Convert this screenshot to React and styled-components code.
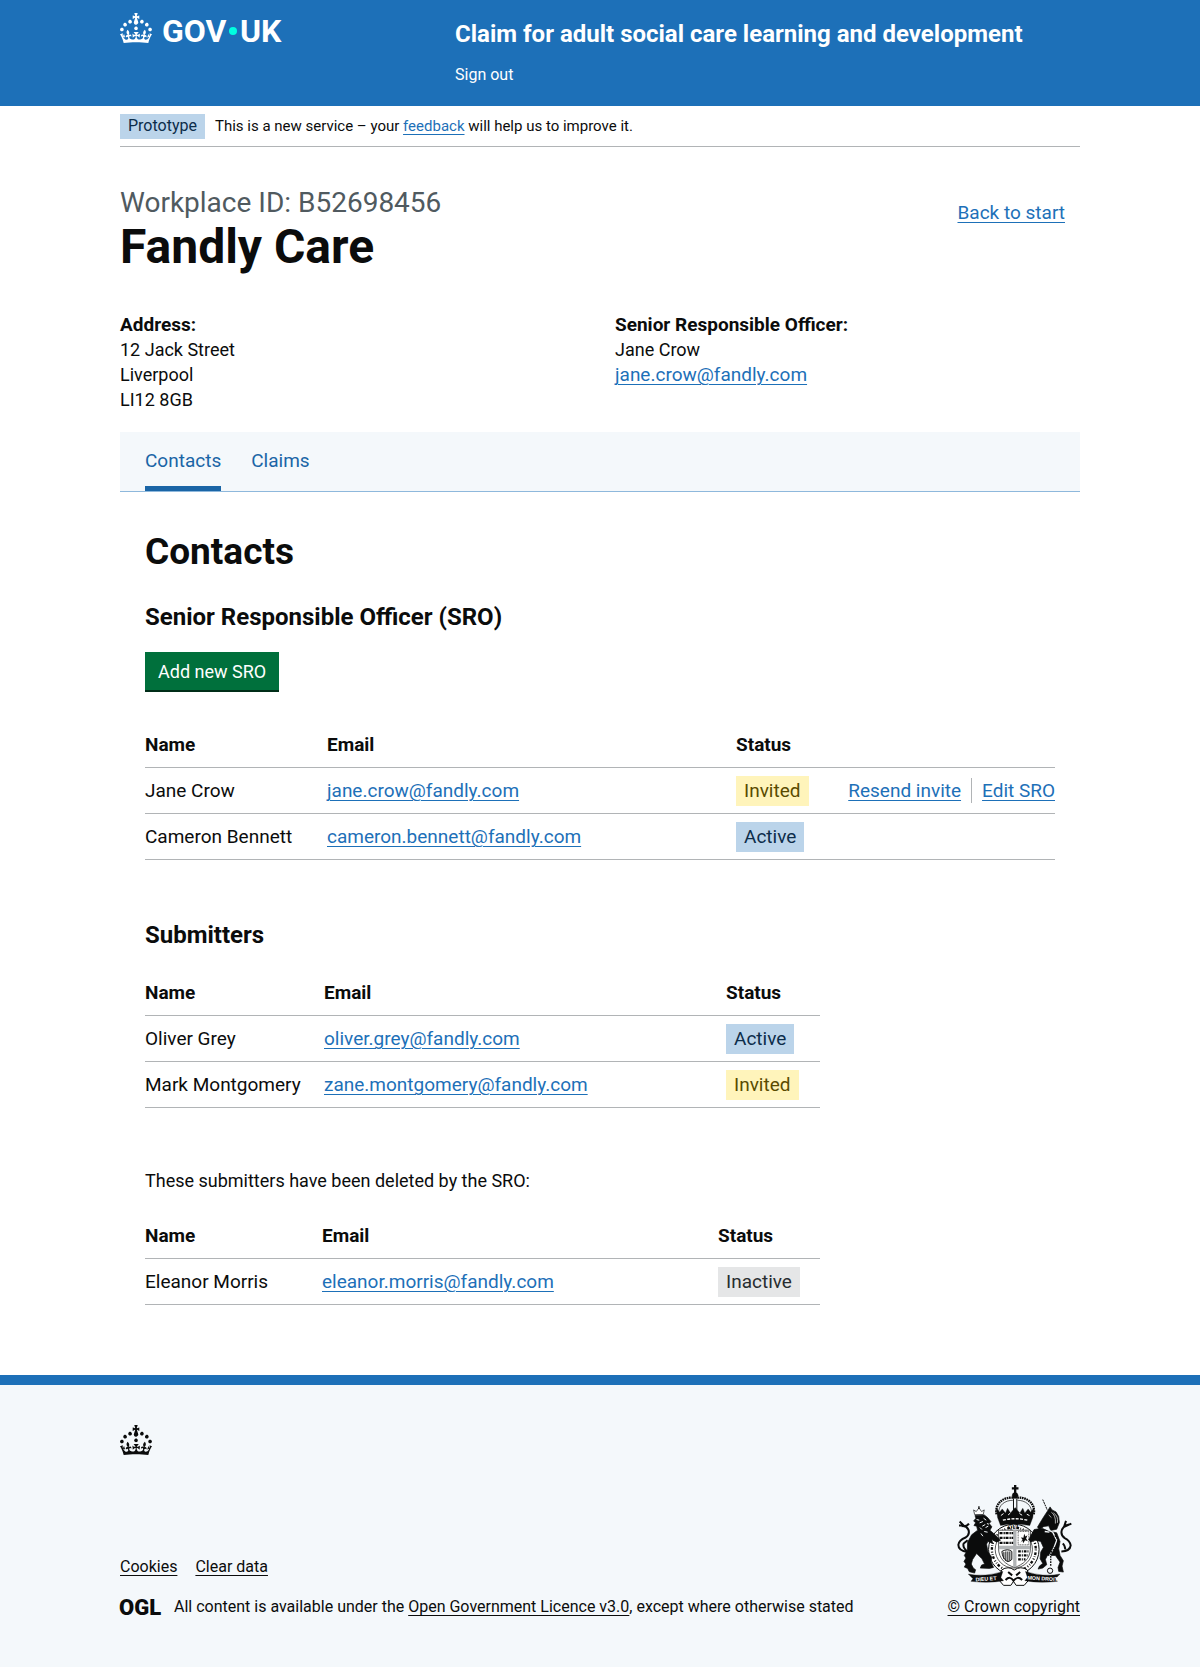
import React from "react";
import styled, { createGlobalStyle } from "styled-components";

const colour = {
  brand: "#1d70b8",
  tint: "#f4f8fb",
  tabBorder: "#8eb8dc",
  tabActive: "#1a65a6",
  text: "#0b0c0c",
  secondary: "#505a5f",
  border: "#b1b4b6",
  green: "#00703c",
  greenShadow: "#002d18",
};

const tagColours = {
  Prototype: { back: "#bbd4ea", text: "#0c2d4a" },
  Active: { back: "#bbd4ea", text: "#0c2d4a" },
  Invited: { back: "#fff4bb", text: "#594b00" },
  Inactive: { back: "#e5e6e7", text: "#282d30" },
};

const GlobalStyle = createGlobalStyle`
  body {
    margin: 0;
    background: #fff;
    color: ${colour.text};
    font: 400 18px/25px Roboto, "Liberation Sans", sans-serif;
  }
  *, *::before, *::after { box-sizing: border-box; }
`;

const Container = styled.div`
  max-width: 960px;
  margin: 0 30px;

  @media (min-width: 1020px) {
    margin: 0 auto;
  }
`;

const Link = styled.a`
  color: ${(p) => (p.$dark ? colour.text : colour.brand)};
  text-decoration: underline;
  text-decoration-thickness: 1px;
  text-underline-offset: 3px;
`;

/* Header */

const Header = styled.header`
  background: ${colour.brand};
  color: #fff;
`;

const HeaderRow = styled(Container)`
  display: grid;
  grid-template-columns: 1fr 2fr;
  padding: 13px 0 21px;
`;

const LogoLink = styled.a`
  display: flex;
  color: #fff;
`;

const HeaderContent = styled.div`
  display: flex;
  flex-direction: column;
  align-items: flex-start;
  gap: 16px;
  padding: 6px 0 0 15px;
`;

const ServiceName = styled.a`
  color: #fff;
  font-size: 24px;
  font-weight: 700;
  line-height: 30px;
  text-decoration: none;
`;

const SignOut = styled.a`
  color: #fff;
  font-size: 16px;
  line-height: 20px;
  text-decoration: none;
`;

/* Phase banner */

const PhaseBanner = styled.div`
  display: flex;
  align-items: center;
  gap: 10px;
  padding: 8px 0 7px;
  border-bottom: 1px solid ${colour.border};
  font-size: 15px;
`;

const Tag = styled.strong`
  display: inline-block;
  padding: ${(p) => (p.$small ? "0 8px 1px" : "2px 8px 3px")};
  background: ${(p) => tagColours[p.$kind].back};
  color: ${(p) => tagColours[p.$kind].text};
  font-size: ${(p) => (p.$small ? "16px" : "19px")};
  font-weight: 400;
  line-height: ${(p) => (p.$small ? "24px" : "25px")};
`;

/* Workplace summary */

const TitleRow = styled.div`
  display: flex;
  justify-content: space-between;
  padding: 40px 15px 0 0;
`;

const Caption = styled.span`
  display: block;
  margin-bottom: 3px;
  color: ${colour.secondary};
  font-size: 28px;
  line-height: 32px;
`;

const PageTitle = styled.h1`
  margin: 0 0 40px;
  font-size: 48px;
  line-height: 50px;
`;

const BackLink = styled(Link)`
  align-self: flex-start;
  margin-top: 13px;
  font-size: 19px;
`;

const Details = styled.div`
  display: grid;
  grid-template-columns: 1fr 1fr;
  column-gap: 30px;
  margin-bottom: 20px;
`;

const DetailTitle = styled.strong`
  display: block;
  font-size: 19px;
`;

const DetailLine = styled.span`
  display: block;
`;

/* Tabs */

const Tabs = styled.nav`
  display: flex;
  gap: 30px;
  padding: 0 25px;
  border-bottom: 1px solid ${colour.tabBorder};
  background: ${colour.tint};
`;

const Tab = styled.a`
  padding: 16px 0 13px;
  border-bottom: 5px solid ${(p) => (p.$active ? colour.tabActive : "transparent")};
  color: ${colour.tabActive};
  font-size: 19px;
  text-decoration: none;
`;

/* Contacts panel */

const Panel = styled.section`
  padding: 40px 25px 70px;
`;

const PanelTitle = styled.h2`
  margin: 0 0 30px;
  font-size: 37px;
  line-height: 40px;
`;

const SectionTitle = styled.h3`
  margin: 0 0 20px;
  font-size: 24px;
  line-height: 30px;
`;

const Button = styled.button`
  display: block;
  margin: 0 0 32px;
  padding: 7px 13px 6px;
  border: 0;
  background: ${colour.green};
  box-shadow: 0 2px 0 ${colour.greenShadow};
  color: #fff;
  cursor: pointer;
  font: inherit;
`;

const Paragraph = styled.p`
  margin: 0 0 20px;
`;

const Table = styled.table`
  width: 100%;
  max-width: ${(p) => (p.$narrow ? "675px" : "none")};
  margin-bottom: ${(p) => (p.$last ? "0" : "60px")};
  border-collapse: separate;
  border-spacing: 0;
  table-layout: fixed;
  font-size: 19px;
`;

const Column = styled.col`
  width: ${(p) => (p.$width ? `${p.$width}px` : "auto")};
`;

const HeadCell = styled.th`
  padding: 10px 0;
  border-bottom: 1px solid ${colour.border};
  text-align: left;
`;

const Cell = styled.td`
  padding: 10px 0;
  border-bottom: 1px solid ${colour.border};
  vertical-align: top;
  white-space: nowrap;
`;

const StatusCell = styled(Cell)`
  padding: 8px 0 7px;
  line-height: 0;
`;

const Actions = styled.ul`
  display: flex;
  justify-content: flex-end;
  margin: 0;
  padding: 0;
  list-style: none;
`;

const Action = styled.li`
  & + & {
    margin-left: 10px;
    padding-left: 10px;
    border-left: 1px solid ${colour.border};
  }
`;

/* Footer */

const Footer = styled.footer`
  padding: 40px 0 50px;
  border-top: 10px solid ${colour.brand};
  background: ${colour.tint};
  font-size: 16px;
  line-height: 20px;
`;

const FooterMeta = styled.div`
  display: flex;
  align-items: flex-end;
  justify-content: space-between;
  margin-top: 29px;
`;

const FooterLinks = styled.div`
  display: flex;
  gap: 18px;
  margin-bottom: 20px;
`;

const Licence = styled.div`
  display: flex;
  align-items: center;
  gap: 13px;
`;

const Copyright = styled(Link)`
  display: flex;
  flex-direction: column;
  align-items: center;
  gap: 10px;
`;

const Drawing = styled.svg`
  display: block;
  flex: none;
  overflow: visible;
`;

const crownPath =
  "M22.6 10.4c-1 .4-2-.1-2.4-1-.4-.9.1-2 1-2.4.9-.4 2 .1 2.4 1s-.1 2-1 2.4m-5.9 6.7c-.9.4-2-.1-2.4-1-.4-.9.1-2 1-2.4.9-.4 2 .1 2.4 1s-.1 2-1 2.4m10.8-3.7c-1 .4-2-.1-2.4-1-.4-.9.1-2 1-2.4.9-.4 2 .1 2.4 1s0 2-1 2.4m3.3 4.8c-1 .4-2-.1-2.4-1-.4-.9.1-2 1-2.4.9-.4 2 .1 2.4 1s-.1 2-1 2.4M17 4.7l2.3 1.2V2.5l-2.3.7-.2-.2.9-3h-3.4l.9 3-.2.2c-.1.1-2.3-.7-2.3-.7v3.4L15 4.7c.1.1.1.2.2.2l-1.3 4c-.1.2-.1.4-.1.6 0 1.1.8 2 1.9 2.2h.7c1-.2 1.9-1.1 1.9-2.1 0-.2 0-.4-.1-.6l-1.3-4c-.1-.2 0-.2.1-.3m-7.6 5.7c.9.4 2-.1 2.4-1 .4-.9-.1-2-1-2.4-.9-.4-2 .1-2.4 1s0 2 1 2.4m-5 3c.9.4 2-.1 2.4-1 .4-.9-.1-2-1-2.4-.9-.4-2 .1-2.4 1s.1 2 1 2.4m-3.2 4.8c.9.4 2-.1 2.4-1 .4-.9-.1-2-1-2.4-.9-.4-2 .1-2.4 1s0 2 1 2.4m14.8 11c4.4 0 8.6.3 12.3.8 1.1-4.5 2.4-7 3.7-8.8l-2.5-.9c.2 1.3.3 1.9 0 2.7-.4-.4-.8-1.1-1.1-2.3l-1.2 4c.7-.5 1.3-.8 2-.9-1.1 2.5-2.6 3.1-3.5 3-1.1-.2-1.7-1.2-1.5-2.1.3-1.2 1.5-1.5 2.1-.1 1.1-2.3-.8-3-2-2.3 1.9-1.9 2.1-3.5.6-5.6-2.1 1.6-2.1 3.2-1.2 5.5-1.2-1.4-3.2-.6-2.5 1.6.9-1.4 2.1-.5 1.9.8-.2 1.1-1.7 2.1-3.5 1.9-2.7-.2-2.9-2.1-2.9-3.6.7-.1 1.9.5 2.9 1.9l.4-4.3c-1.1 1.1-2.1 1.4-3.2 1.4.4-1.2 2.1-3 2.1-3h-5.4s1.7 1.9 2.1 3c-1.1 0-2.1-.2-3.2-1.4l.4 4.3c1-1.4 2.2-2 2.9-1.9-.1 1.5-.2 3.4-2.9 3.6-1.9.2-3.4-.8-3.5-1.9-.2-1.3 1-2.2 1.9-.8.7-2.3-1.2-3-2.5-1.6.9-2.2.9-3.9-1.2-5.5-1.5 2-1.3 3.7.6 5.6-1.2-.7-3.1 0-2 2.3.6-1.4 1.8-1.1 2.1.1.2.9-.3 1.9-1.5 2.1-.9.2-2.4-.5-3.5-3 .6 0 1.2.3 2 .9l-1.2-4c-.3 1.1-.7 1.9-1.1 2.3-.3-.8-.2-1.4 0-2.7l-2.9.9C1.3 23 2.6 25.5 3.7 30c3.7-.5 7.9-.8 12.3-.8";

function Crown() {
  return (
    <Drawing width="32" height="30" viewBox="0 0 32 30" fill="currentColor" aria-hidden="true">
      <path fillRule="evenodd" clipRule="evenodd" d={crownPath} />
    </Drawing>
  );
}

function GovLogo() {
  return (
    <Drawing width="164" height="38" viewBox="0 0 164 38" fill="currentColor" role="img" aria-label="GOV.UK">
      <path fillRule="evenodd" clipRule="evenodd" d={crownPath} />
      <g fontFamily="Roboto, Liberation Sans, sans-serif" fontSize="32" fontWeight="700">
        <text x="42" y="29">GOV</text>
        <text x="120" y="29">UK</text>
      </g>
      <circle cx="113" cy="18" r="4" fill="#00ffe0" />
    </Drawing>
  );
}

function OglLogo() {
  return (
    <Drawing width="41" height="17" viewBox="0 0 41 17" fill="currentColor" role="img" aria-label="Open Government Licence">
      <text x="-1" y="16" fontFamily="Roboto, Liberation Sans, sans-serif" fontSize="22" fontWeight="900">
        OGL
      </text>
    </Drawing>
  );
}

function RoyalArms() {
  const ink = colour.text;
  return (
    <Drawing width="117" height="103" viewBox="46 42 352 308" fill="none" stroke={ink} role="img" aria-label="Royal coat of arms">
      {/* crown */}
      <g>
        <path d="M227 44v28M217 54h20" strokeWidth="7" />
        <circle cx="227" cy="76" r="9" fill={ink} />
        <path d="M171 132c-6-34 22-52 50-50M283 132c6-34-22-52-50-50" strokeWidth="7" strokeDasharray="5 2" />
        <path d="M178 132c-4-28 20-42 42-42M276 132c4-28-20-42-42-42" strokeWidth="2" />
        <path d="M222 84v36M232 84v36" strokeWidth="3" />
        <path fill={ink} d="M170 112l10 14 8-10 10 12 6-14 9 14 14-16 14 16 9-14 6 14 10-12 8 10 10-14-4 30-9 24q-44-9-88 0l-9-24z" />
        <path d="M190 150q37-9 74 0" stroke="#fff" strokeWidth="4" strokeDasharray="9 4" />
        <path d="M184 136l8-6M206 134l6-5M240 130l8 5M262 132l8 4" stroke="#fff" strokeWidth="3" />
      </g>
      {/* garter */}
      <g>
        <circle cx="223" cy="238" r="76" fill="#fff" strokeWidth="3" />
        <circle cx="223" cy="238" r="66" strokeWidth="7" strokeDasharray="3 6 8 4 2 5" />
        <circle cx="223" cy="238" r="56" strokeWidth="2" />
        <text x="205" y="176" fill={ink} stroke="none" fontFamily="Liberation Serif, serif" fontSize="17" fontWeight="700">QUI</text>
      </g>
      {/* shield */}
      <g>
        <path d="M177 180h96v54c0 32-22 50-48 58-26-8-48-26-48-58z" fill="#fff" strokeWidth="2" />
        <path d="M226 180v111M178 232h94" stroke="#b1b4b6" strokeWidth="10" />
        <path d="M180 189h41M180 203h41M180 218h41" strokeWidth="7" strokeDasharray="9 3 4 2" />
        <rect x="236" y="184" width="32" height="40" strokeWidth="2" strokeDasharray="3 2" />
        <path d="M243 218l6-10-5-6 8 1 2-12 4 8 6-4-4 10 5 8-8-3-6 9-2-8z" fill={ink} stroke="none" />
        <path d="M187 244q18-10 30 0v24q-8 8-14 6-14-8-16-30zM193 246v20M199 244v28M205 244v30M211 244v28" strokeWidth="3" />
        <path d="M236 244h32M236 256h30M236 268h22" strokeWidth="7" strokeDasharray="8 3 3 3" />
      </g>
      {/* lion */}
      <g>
        <path d="M105 133l-3-14 8 5 8-11 8 11 8-5-3 14z" fill="#fff" strokeWidth="2" />
        <path d="M118 108v8" strokeWidth="4" />
        <path fill={ink} strokeWidth="2" d="M106 136l28-2 10 8 10 12-5 6 8 10-6 10 18 16 14 14-12 6-14-8 2 12-14-6-4 8 4 22 12 18-3 12 8 18-12 3-28-1 4-9 9-3-8-16-16-16-12 18-4 14 6 12 7 5-3 10-16-4-5-10-10-4 5-9-6-8 6-10-5-8 9-16 1-24 12-22 18-14-3-12-8-2 5-8-6-6 7-8z" />
        <path d="M111 148l8 2M120 158l10-4M132 144l8 6M128 168l9-5M121 172l6 6M138 172l8-4M142 160l6 2M134 184l10 2M124 190l6 8" stroke={colour.tint} strokeWidth="3" />
        <path d="M84 246q-28-4-28-22 2-14 22-22 14-10 8-24-6-12-20-10M60 154l12 12-14 0M88 160q-6 8-16 8M84 246q-16-14-12-26l12-10" strokeWidth="6" />
      </g>
      {/* unicorn */}
      <g>
        <path d="M310 88l14 32" strokeWidth="3" strokeDasharray="6 2" />
        <path fill={ink} strokeWidth="2" d="M326 120l6-10 6 9 12 6 8 14 2 18-8 20-18 4-6-14-14 2-14 8-6-6 12-20 10-16z" />
        <path d="M336 126q14 10 12 34M328 134l8 8M342 128q16 10 12 30" stroke="#fff" strokeWidth="2" />
        <path fill={ink} strokeWidth="2" d="M284 178l24-4 26 10 18 4 10 26-4 22 4 20 10 16-4 16 4 18-14-2-2-12 6-16-14-20-24 0-6 12 4 16-12 10-14 3 4-9 10-8-8-14 2-20 8-14-8-18-18-4-12 6-6-8z" />
        <path d="M312 172l28 14 12 24-8 22-12 22v30M330 186l-14-2" stroke={colour.tint} strokeWidth="4" />
        <path d="M346 196q16 14 6 30l-18 22v42" strokeWidth="4" strokeDasharray="5 3" />
        <circle cx="332" cy="302" r="8" strokeWidth="3" />
        <path d="M366 244q26 0 28-18-2-14-18-22-14-10-8-26 6-14 24-16M380 152l-6 18 22-10M378 238q-2-14-8-18" strokeWidth="6" />
      </g>
      {/* motto scroll */}
      <g>
        <path fill="#fff" strokeWidth="3" d="M186 300q20-14 38 0 20-14 40 0l4 30-14 16h-24l-8-12-8 12h-22l-12-14z" />
        <path d="M198 330q14-14 24 2 12-16 26-2M206 306l12 10M242 306l-12 10" strokeWidth="6" />
        <path fill={ink} d="M86 312q50 10 104-8l-6 18 8 10q-44 8-98 2l6-8z" />
        <path fill={ink} d="M362 312q-50 10-104-8l6 18-8 10q44 8 98 2l-6-8z" />
        <g fill="#fff" stroke="none" fontFamily="Liberation Sans, sans-serif" fontSize="16" fontWeight="700">
          <text x="108" y="332" transform="rotate(-4 140 326)">DIEU ET</text>
          <text x="264" y="331" transform="rotate(3 310 326)">MON DROIT</text>
        </g>
      </g>
    </Drawing>
  );
}

const EmailAnchor = styled(Link)`
  font-size: 19px;
`;

function EmailLink({ address }) {
  return <EmailAnchor href={`mailto:${address}`}>{address}</EmailAnchor>;
}

function ContactsTable({ label, people, widths, narrow, last, actions }) {
  return (
    <Table aria-label={label} $narrow={narrow} $last={last}>
      <colgroup>
        {widths.map((width, index) => (
          <Column key={index} $width={width} />
        ))}
        <Column />
      </colgroup>
      <thead>
        <tr>
          <HeadCell scope="col">Name</HeadCell>
          <HeadCell scope="col">Email</HeadCell>
          <HeadCell scope="col">Status</HeadCell>
          {actions && <HeadCell as="td" />}
        </tr>
      </thead>
      <tbody>
        {people.map((person) => (
          <tr key={person.email}>
            <Cell>{person.name}</Cell>
            <Cell>
              <EmailLink address={person.email} />
            </Cell>
            <StatusCell>
              <Tag $kind={person.status}>{person.status}</Tag>
            </StatusCell>
            {actions && (
              <Cell>
                {person.status === "Invited" && (
                  <Actions>
                    <Action>
                      <Link href="#resend">Resend invite</Link>
                    </Action>
                    <Action>
                      <Link href="#edit">Edit SRO</Link>
                    </Action>
                  </Actions>
                )}
              </Cell>
            )}
          </tr>
        ))}
      </tbody>
    </Table>
  );
}

const officers = [
  { name: "Jane Crow", email: "jane.crow@fandly.com", status: "Invited" },
  { name: "Cameron Bennett", email: "cameron.bennett@fandly.com", status: "Active" },
];

const submitters = [
  { name: "Oliver Grey", email: "oliver.grey@fandly.com", status: "Active" },
  { name: "Mark Montgomery", email: "zane.montgomery@fandly.com", status: "Invited" },
];

const deletedSubmitters = [
  { name: "Eleanor Morris", email: "eleanor.morris@fandly.com", status: "Inactive" },
];

export default function App() {
  return (
    <>
      <GlobalStyle />
      <Header>
        <HeaderRow>
          <LogoLink href="#home">
            <GovLogo />
          </LogoLink>
          <HeaderContent>
            <ServiceName href="#service">Claim for adult social care learning and development</ServiceName>
            <SignOut href="#sign-out">Sign out</SignOut>
          </HeaderContent>
        </HeaderRow>
      </Header>

      <Container>
        <PhaseBanner>
          <Tag $kind="Prototype" $small>
            Prototype
          </Tag>
          <span>
            This is a new service – your <Link href="#feedback">feedback</Link> will help us to improve it.
          </span>
        </PhaseBanner>

        <main>
          <TitleRow>
            <div>
              <Caption>Workplace ID: B52698456</Caption>
              <PageTitle>Fandly Care</PageTitle>
            </div>
            <BackLink href="#start">Back to start</BackLink>
          </TitleRow>

          <Details>
            <div>
              <DetailTitle>Address:</DetailTitle>
              <DetailLine>12 Jack Street</DetailLine>
              <DetailLine>Liverpool</DetailLine>
              <DetailLine>LI12 8GB</DetailLine>
            </div>
            <div>
              <DetailTitle>Senior Responsible Officer:</DetailTitle>
              <DetailLine>Jane Crow</DetailLine>
              <DetailLine>
                <EmailLink address="jane.crow@fandly.com" />
              </DetailLine>
            </div>
          </Details>

          <Tabs aria-label="Workplace sections">
            <Tab href="#contacts" $active aria-current="page">
              Contacts
            </Tab>
            <Tab href="#claims">Claims</Tab>
          </Tabs>

          <Panel>
            <PanelTitle>Contacts</PanelTitle>
            <SectionTitle>Senior Responsible Officer (SRO)</SectionTitle>
            <Button type="button">Add new SRO</Button>
            <ContactsTable label="Senior Responsible Officers" people={officers} widths={[182, 409, 84]} actions />

            <SectionTitle>Submitters</SectionTitle>
            <ContactsTable label="Submitters" people={submitters} widths={[179, 402]} narrow />

            <Paragraph>These submitters have been deleted by the SRO:</Paragraph>
            <ContactsTable label="Deleted submitters" people={deletedSubmitters} widths={[177, 396]} narrow last />
          </Panel>
        </main>
      </Container>

      <Footer>
        <Container>
          <Crown />
          <FooterMeta>
            <div>
              <FooterLinks>
                <Link href="#cookies" $dark>
                  Cookies
                </Link>
                <Link href="#clear" $dark>
                  Clear data
                </Link>
              </FooterLinks>
              <Licence>
                <OglLogo />
                <span>
                  All content is available under the{" "}
                  <Link href="#licence" $dark>
                    Open Government Licence v3.0
                  </Link>
                  , except where otherwise stated
                </span>
              </Licence>
            </div>
            <Copyright href="#copyright" $dark>
              <RoyalArms />
              <span>© Crown copyright</span>
            </Copyright>
          </FooterMeta>
        </Container>
      </Footer>
    </>
  );
}
